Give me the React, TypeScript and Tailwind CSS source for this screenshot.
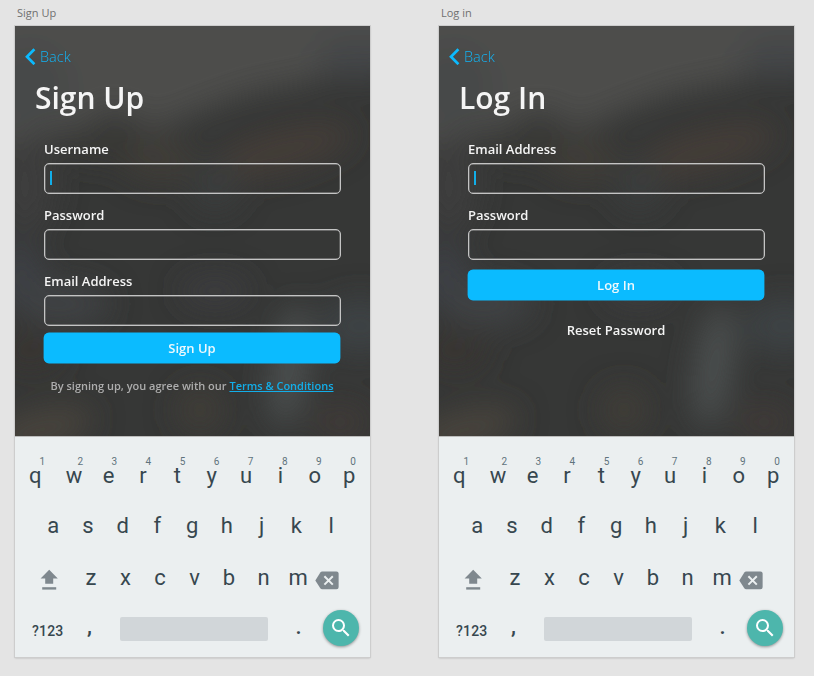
import React from "react";

function Backdrop({ id }: { id: string }) {
  return (
    <svg className="absolute inset-0 h-full w-full" viewBox="0 0 355 410" preserveAspectRatio="none" aria-hidden="true">
      <defs>
        <filter id={`${id}-soft`} x="-50%" y="-50%" width="200%" height="200%">
          <feGaussianBlur stdDeviation="15" />
        </filter>
      </defs>
      <rect width="355" height="410" fill="#363736" />
      <g filter={`url(#${id}-soft)`}>
        <path d="M-60 -60H420V20L350 38L300 55L235 68L190 84L140 104L100 84L60 104L0 118L-60 125Z" fill="#4d4d4c" />
        <ellipse cx="15" cy="60" rx="40" ry="40" fill="#474a4a" />
        <ellipse cx="345" cy="30" rx="45" ry="22" fill="#44474a" />
        <ellipse cx="95" cy="120" rx="50" ry="16" fill="#393836" />
        <ellipse cx="10" cy="160" rx="30" ry="50" fill="#3c3e3e" />
        <ellipse cx="265" cy="125" rx="75" ry="20" fill="#443e39" transform="rotate(-15 265 125)" />
        <ellipse cx="145" cy="134" rx="35" ry="22" fill="#413d37" />
        <ellipse cx="200" cy="160" rx="25" ry="25" fill="#3b3d3e" />
        <ellipse cx="5" cy="250" rx="25" ry="35" fill="#3c4144" />
        <ellipse cx="50" cy="278" rx="45" ry="22" fill="#3f4344" />
        <ellipse cx="200" cy="265" rx="35" ry="15" fill="#3d3e41" />
        <ellipse cx="345" cy="300" rx="40" ry="28" fill="#3e4245" />
        <ellipse cx="275" cy="340" rx="19" ry="62" fill="#4c4f50" transform="rotate(8 275 340)" />
        <ellipse cx="15" cy="325" rx="35" ry="20" fill="#383633" />
        <ellipse cx="25" cy="404" rx="55" ry="18" fill="#4a443c" transform="rotate(-15 25 404)" />
        <ellipse cx="185" cy="384" rx="24" ry="24" fill="#413c38" />
        <ellipse cx="325" cy="396" rx="30" ry="18" fill="#3f3b37" />
      </g>
    </svg>
  );
}

function Field({ label, focused = false }: { label: string; focused?: boolean }) {
  return (
    <label className="mb-[11px] block">
      <span className="block h-6 text-[13px] leading-5 font-semibold text-[#f4f4f4]">{label}</span>
      <span className="flex h-[31px] w-[297px] items-center rounded-[5px] border border-[#c4c4c4] pl-[5px] shadow-[inset_0_0_0_0.4px_#a0a0a0]">
        {focused && <span className="mb-px h-3.5 w-0.5 bg-[#12aee9]" />}
      </span>
    </label>
  );
}

function SubmitButton({ children }: { children: React.ReactNode }) {
  return (
    <button className="-mt-px mb-3 block h-[30px] w-[296px] rounded-[5px] bg-[#0bbbff] text-center text-[13px] leading-[31px] font-semibold text-[#eef8fc] shadow-[0_0_0_0.4px_#0bbbff]">
      {children}
    </button>
  );
}

function Letters({ keys, className }: { keys: string; className: string }) {
  return (
    <>
      {keys.split("").map((k) => (
        <span key={k} className={className}>
          {k}
        </span>
      ))}
    </>
  );
}

function Keyboard() {
  return (
    <div className="h-[221px] border-t border-[#bcbcbb] bg-[#ebeff0] font-['Roboto',sans-serif] text-[22px] text-[#37474f]">
      <div className="flex h-2.5 pt-[19px] pl-[12px] text-[10px] leading-3 text-[#5f737c]">
        <span className="mr-[5.7px] w-[34.1px] text-center">1</span>
        <Letters keys="234567890" className="w-[34.1px] shrink-0 text-center" />
      </div>
      <div className="flex pt-[5px] pl-[3px] leading-[30px]">
        <span className="mr-[4.5px] w-[34.4px] text-center">q</span>
        <Letters keys="wertyuiop" className="w-[34.4px] text-center" />
      </div>
      <div className="flex pt-[20px] pl-[20.8px] leading-[30px]">
        <Letters keys="asdfghjkl" className="w-[34.75px] text-center" />
      </div>
      <div className="flex pt-[22px] leading-[30px]">
        <svg className="mt-[6px] ml-[25px] h-[22px] w-[19px]" viewBox="0 0 19 22" fill="#7f888e">
          <path d="M9.2 0.8L17.8 9.6H13.2V14.8H5.2V9.6H0.6Z" />
          <path d="M2.2 18.2H16.2V20.6H2.2Z" />
        </svg>
        <div className="ml-[14.8px] flex">
          <Letters keys="zxcvbnm" className="w-[34.5px] text-center" />
        </div>
        <svg className="mt-[7.5px] -ml-[0.5px] h-[19px] w-[24px]" viewBox="0 0 24 19">
          <path d="M7.2 0.5H21.5Q23.6 0.5 23.6 2.6V16.2Q23.6 18.3 21.5 18.3H7.2Q6 18.3 5.3 17.3L0.3 9.4L5.3 1.5Q6 0.5 7.2 0.5Z" fill="#7f888e" />
          <path d="M9.4 5.2L17.8 13.6M17.8 5.2L9.4 13.6" stroke="#ebeff0" strokeWidth="2" />
        </svg>
      </div>
      <div className="flex items-start pt-[17px]">
        <span className="mt-[11px] ml-[17px] w-[50px] text-[14px] leading-5 font-medium tracking-[0.2px]">?123</span>
        <span className="mt-[4px] w-[15px] text-center leading-[26px] font-medium">,</span>
        <span className="mt-[7px] ml-[23px] h-6 w-[148px] rounded-[2px] bg-[#d1d6d9]" />
        <span className="mt-[4px] ml-[23px] w-[15px] text-center leading-[26px] font-medium">.</span>
        <span className="ml-[17px] flex size-9 items-center justify-center rounded-full bg-[#4db6ac] shadow-[0_1px_3px_rgba(0,0,0,0.4)]">
          <svg className="size-6" viewBox="0 0 24 24" fill="#fff">
            <path d="M15.5 14h-.79l-.28-.27A6.471 6.471 0 0 0 16 9.5 6.5 6.5 0 1 0 9.5 16c1.61 0 3.09-.59 4.23-1.57l.27.28v.79l5 4.99L20.49 19l-4.99-5zm-6 0C7.01 14 5 11.99 5 9.5S7.01 5 9.5 5 14 7.01 14 9.5 11.99 14 9.5 14z" />
          </svg>
        </span>
      </div>
    </div>
  );
}

function Artboard({ id, name, title, children }: { id: string; name: string; title: string; children: React.ReactNode }) {
  return (
    <section className="w-[355px]">
      <h2 className="h-[20px] pl-0.5 text-[11px] leading-[14px] font-normal text-[#707070]">{name}</h2>
      <div className="h-[631px] shadow-[0_0_0_1px_#cdcdcd,0_1px_2px_rgba(0,0,0,0.25)]">
        <div className="relative h-[410px] overflow-hidden">
          <Backdrop id={id} />
          <div className="relative pt-[21px]">
            <a className="flex h-[31px] pl-[10px] text-[14.5px] leading-5 font-light text-[#12b4f5]">
              <svg className="mt-px h-[17px] w-[11px]" viewBox="0 0 11 17" fill="none">
                <path d="M9.4 1.2L2 8.7L9.4 16.2" stroke="#0bbbff" strokeWidth="2.7" />
              </svg>
              <span className="ml-[4px]">Back</span>
            </a>
            <h1 className="pl-[20px] text-[30px] leading-10 font-semibold text-[#f5f5f5]">{title}</h1>
            <div className="pt-[21px] pl-[29px]">{children}</div>
          </div>
        </div>
        <Keyboard />
      </div>
    </section>
  );
}

export default function App() {
  return (
    <main className="flex h-[676px] w-[814px] gap-[69px] overflow-hidden bg-[#e4e4e4] pt-[6px] pl-[15px] font-['Open_Sans',sans-serif]">
      <Artboard id="signup" name="Sign Up" title="Sign Up">
        <Field label="Username" focused />
        <Field label="Password" />
        <Field label="Email Address" />
        <div className="mt-[-4px]">
          <SubmitButton>Sign Up</SubmitButton>
        </div>
        <p className="w-[296px] text-center text-[11px] leading-[22px] font-semibold whitespace-nowrap text-[#adadad]">
          By signing up, you agree with our <a className="text-[#12aee9] underline">Terms &amp; Conditions</a>
        </p>
      </Artboard>
      <Artboard id="login" name="Log in" title="Log In">
        <Field label="Email Address" focused />
        <Field label="Password" />
        <div>
          <SubmitButton>Log In</SubmitButton>
        </div>
        <p className="mt-5 w-[296px] text-center text-[13px] leading-5 font-semibold text-[#f4f4f4]">Reset Password</p>
      </Artboard>
    </main>
  );
}
